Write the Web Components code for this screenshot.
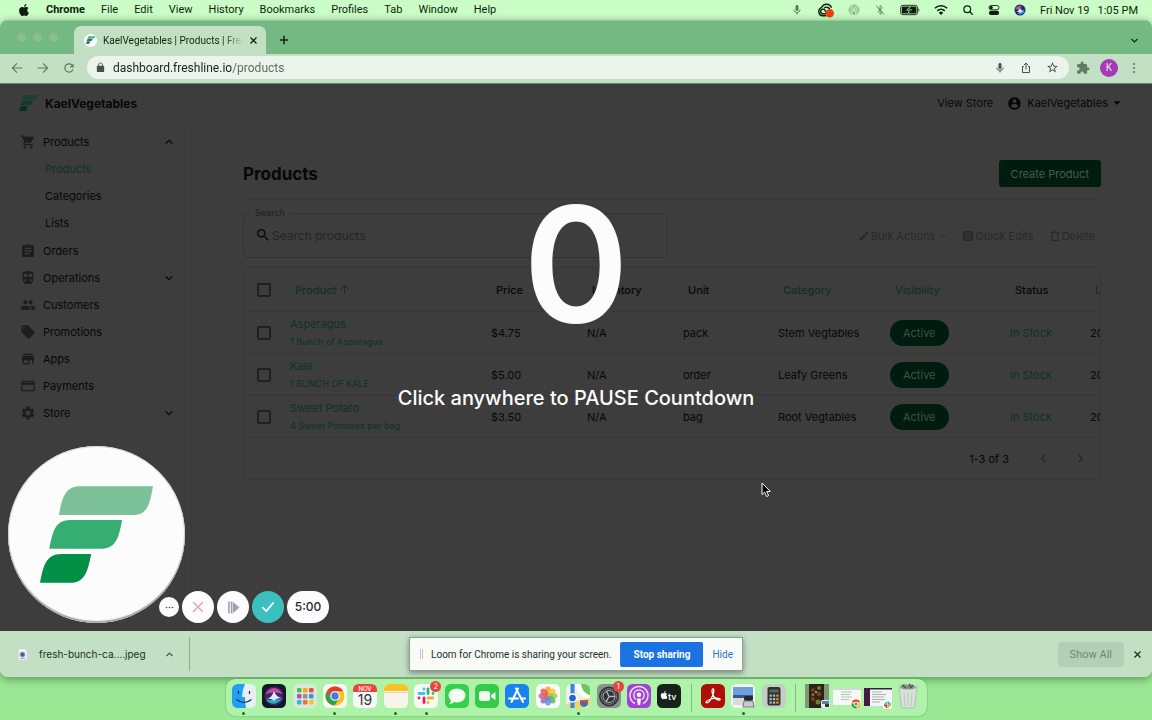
<!DOCTYPE html>
<html lang="en">
<head>
<meta charset="utf-8">
<title>KaelVegetables | Products | Freshline</title>
<style>
  html, body {
    margin: 0;
    height: 100%;
  }
  body {
    display: flex;
    flex-direction: column;
    overflow: hidden;
    background: linear-gradient(#cbfdc6 0 80px, #9ae894 600px);
    font-family: Roboto, "Liberation Sans", sans-serif;
    font-size: 11px;
    color: #10240f;
  }
  browser-window {
    flex: 1;
  }
</style>
</head>
<body>
<mac-menubar></mac-menubar>
<browser-window>
  <shop-dashboard></shop-dashboard>
  <loom-countdown></loom-countdown>
  <loom-controls></loom-controls>
</browser-window>
<mac-dock></mac-dock>

<script>
const ICONS = {
  apple: '<path d="M12.152 6.896c-.948 0-2.415-1.078-3.96-1.04-2.04.027-3.91 1.183-4.961 3.014-2.117 3.675-.546 9.103 1.519 12.09 1.013 1.454 2.208 3.09 3.792 3.039 1.52-.065 2.09-.987 3.935-.987 1.831 0 2.35.987 3.96.948 1.637-.026 2.676-1.48 3.676-2.948 1.156-1.688 1.636-3.325 1.662-3.415-.039-.013-3.182-1.221-3.22-4.857-.026-3.04 2.48-4.494 2.597-4.559-1.429-2.09-3.623-2.324-4.39-2.376-2-.156-3.675 1.09-4.61 1.09zM15.53 3.83c.843-1.012 1.4-2.427 1.245-3.83-1.207.052-2.662.805-3.532 1.818-.78.896-1.454 2.338-1.273 3.714 1.338.104 2.715-.688 3.559-1.701"/>',
  mic: '<path d="M12 14c1.66 0 3-1.34 3-3V5c0-1.66-1.34-3-3-3S9 3.34 9 5v6c0 1.66 1.34 3 3 3zm5.3-3c0 3-2.54 5.1-5.3 5.1S6.7 14 6.7 11H5c0 3.41 2.72 6.23 6 6.72V21h2v-3.28c3.28-.48 6-3.3 6-6.72h-1.7z"/>',
  cloud: '<g fill="none" stroke="currentColor" stroke-width="2"><path d="M13 19.500H8a6 6 0 0 1-1.500-11.600A7.500 7.500 0 0 1 20.500 8"/><path d="M13 16.500H8.500a3.200 3.200 0 1 1 2.500-5l3 4"/><path d="M10 9a4.800 4.800 0 0 1 8 1"/></g><circle cx="18" cy="16" r="6" fill="#f0400e"/>',
  airdrop: '<g fill="none" stroke="currentColor" stroke-width="1.700"><path d="M8 21a10 10 0 1 1 8 0"/><path d="M9 18a7 7 0 1 1 6 0"/><path d="M10 15a4 4 0 1 1 4 0"/></g><path d="M12 12l3 9H9z"/>',
  bluetooth: '<g fill="none" stroke="currentColor" stroke-width="1.700"><path d="M7 7.500l10 9-5 4.500V3l5 4.500-10 9"/><path d="M4 3l16 18"/></g>',
  battery: '<rect x="1" y="4" width="29" height="16" rx="4" fill="none" stroke="currentColor" stroke-width="1.500"/><rect x="3" y="6" width="25" height="12" rx="2"/><path d="M31.500 9v6q3-3 0-6z"/><path d="M18 5l-8 8h5l-2 6 8-8h-5z" fill="#c9fcc4"/><path d="M17 7.500l-4.500 4.500h4l-1.500 4.500 4.500-4.500h-4z"/>',
  wifi: '<g fill="none" stroke="currentColor" stroke-width="2.800"><path d="M1.500 9a15 15 0 0 1 21 0"/><path d="M5.500 13.500a9.500 9.500 0 0 1 13 0"/></g><path d="M12 20.500l-3.800-4a5.500 5.500 0 0 1 7.600 0z"/>',
  lens: '<g fill="none" stroke="currentColor" stroke-width="2.400"><circle cx="10.500" cy="10.500" r="6.800"/><path d="M15.500 15.500l6 6"/></g>',
  toggles: '<rect x="2" y="3" width="20" height="8.500" rx="4.250" fill="none" stroke="currentColor" stroke-width="1.800"/><circle cx="6.500" cy="7.200" r="3.200"/><path d="M6 13.500h12a4 4 0 0 1 0 8.500H6a4 4 0 0 1 0-8.500z"/>',
  siri: '<circle cx="12" cy="12" r="11" fill="#243064"/><path d="M3 9a10 8 0 0 1 13-5q-7 5-5 9z" fill="#d44c9c"/><path d="M21 13a9 9 0 0 1-14 6q7-2 6-8z" fill="#3d9be0"/><path d="M5 15q6-1 7-8 2 7 7 7-5 1-7 4-2-3-7-3z" fill="#e4f2fb"/>',
  back: '<path d="M21 12H4m8-8l-8 8 8 8" fill="none" stroke="currentColor" stroke-width="2"/>',
  forward: '<path d="M3 12h17m-8-8l8 8-8 8" fill="none" stroke="currentColor" stroke-width="2"/>',
  reload: '<path d="M17.650 6.350C16.200 4.900 14.210 4 12 4c-4.420 0-7.990 3.580-7.990 8s3.570 8 7.990 8c3.730 0 6.840-2.550 7.730-6h-2.080c-.820 2.330-3.040 4-5.650 4-3.310 0-6-2.690-6-6s2.690-6 6-6c1.660 0 3.140.69 4.220 1.780L13 11h7V4l-2.350 2.350z"/>',
  lock: '<path d="M18 8h-1V6c0-2.760-2.240-5-5-5S7 3.240 7 6v2H6c-1.100 0-2 .9-2 2v10c0 1.100.9 2 2 2h12c1.100 0 2-.9 2-2V10c0-1.100-.9-2-2-2zm-2.900 0H8.900V6c0-1.710 1.390-3.100 3.100-3.100s3.100 1.390 3.100 3.100v2z"/>',
  share: '<path d="M8 9H5v12h14V9h-3M12 15V2.500M8 6l4-4 4 4" fill="none" stroke="currentColor" stroke-width="2"/>',
  star: '<path d="M22 9.240l-7.190-.62L12 2 9.190 8.630 2 9.240l5.460 4.730L5.820 21 12 17.270 18.180 21l-1.630-7.030L22 9.240zM12 15.400l-3.760 2.270 1-4.280-3.320-2.880 4.380-.38L12 6.100l1.710 4.040 4.380.38-3.320 2.880 1 4.280L12 15.400z"/>',
  puzzle: '<path d="M20.500 11H19V7c0-1.100-.9-2-2-2h-4V3.500C13 2.120 11.880 1 10.500 1S8 2.120 8 3.500V5H4c-1.100 0-1.990.9-1.990 2v3.800H3.500c1.490 0 2.700 1.210 2.700 2.700s-1.210 2.700-2.700 2.700H2V20c0 1.100.9 2 2 2h3.800v-1.500c0-1.490 1.210-2.700 2.700-2.700 1.490 0 2.700 1.210 2.700 2.700V22H17c1.100 0 2-.9 2-2v-4h1.500c1.380 0 2.500-1.120 2.500-2.500S21.880 11 20.500 11z"/>',
  dots: '<circle cx="12" cy="4" r="2.200"/><circle cx="12" cy="12" r="2.200"/><circle cx="12" cy="20" r="2.200"/>',
  more: '<circle cx="4" cy="12" r="2.200"/><circle cx="12" cy="12" r="2.200"/><circle cx="20" cy="12" r="2.200"/>',
  close: '<path d="M4 4l16 16M20 4L4 20" fill="none" stroke="currentColor" stroke-width="3.400"/>',
  cross: '<path d="M3 3l18 18M21 3L3 21" fill="none" stroke="currentColor" stroke-width="3" stroke-linecap="round"/>',
  plus: '<path d="M12 2v20M2 12h20" fill="none" stroke="currentColor" stroke-width="3.600"/>',
  down: '<path d="M4 8l8 8 8-8" fill="none" stroke="currentColor" stroke-width="3"/>',
  up: '<path d="M4 16l8-8 8 8" fill="none" stroke="currentColor" stroke-width="3"/>',
  left: '<path d="M15.500 5l-7 7 7 7" fill="none" stroke="currentColor" stroke-width="2.600"/>',
  right: '<path d="M8.500 5l7 7-7 7" fill="none" stroke="currentColor" stroke-width="2.600"/>',
  caret: '<path d="M2 7h20L12 18z"/>',
  sort: '<path d="M12 22V4M3 12.500L12 3.500l9 9" fill="none" stroke="currentColor" stroke-width="2.200"/>',
  cart: '<path d="M7 18c-1.100 0-1.990.9-1.990 2S5.900 22 7 22s2-.9 2-2-.9-2-2-2zM1 2v2h2l3.600 7.590-1.350 2.450c-.16.280-.25.610-.25.960 0 1.100.9 2 2 2h12v-2H7.420c-.14 0-.25-.11-.25-.25l.03-.12.9-1.630h7.450c.75 0 1.410-.41 1.750-1.030l3.580-6.490c.08-.14.12-.31.12-.48 0-.55-.45-1-1-1H5.210l-.94-2H1zm16 16c-1.100 0-1.990.9-1.990 2s.89 2 1.990 2 2-.9 2-2-.9-2-2-2z"/>',
  orders: '<path d="M19 3h-4.180C14.400 1.840 13.300 1 12 1c-1.300 0-2.400.84-2.820 2H5c-1.100 0-2 .9-2 2v14c0 1.100.9 2 2 2h14c1.100 0 2-.9 2-2V5c0-1.100-.9-2-2-2zm-7 0c.55 0 1 .45 1 1s-.45 1-1 1-1-.45-1-1 .45-1 1-1zm2 14H7v-2h7v2zm3-4H7v-2h10v2zm0-4H7V7h10v2z"/>',
  train: '<path d="M12 2c-4 0-8 .5-8 4v9.500C4 17.430 5.570 19 7.500 19L6 20.500v.5h12v-.5L16.500 19c1.930 0 3.500-1.570 3.500-3.500V6c0-3.500-4-4-8-4zM7.500 17c-.83 0-1.500-.67-1.500-1.500S6.670 14 7.500 14s1.500.67 1.500 1.500S8.330 17 7.500 17zm3.500-7H6V6h5v4zm2 0V6h5v4h-5zm3.500 7c-.83 0-1.500-.67-1.500-1.500s.67-1.500 1.500-1.500 1.500.67 1.500 1.500-.67 1.500-1.500 1.500z"/>',
  people: '<path d="M16 11c1.660 0 2.990-1.340 2.990-3S17.660 5 16 5c-1.660 0-3 1.340-3 3s1.340 3 3 3zm-8 0c1.660 0 2.990-1.340 2.990-3S9.660 5 8 5C6.340 5 5 6.340 5 8s1.340 3 3 3zm0 2c-2.330 0-7 1.170-7 3.500V19h14v-2.500c0-2.330-4.670-3.500-7-3.500zm8 0c-.29 0-.62.02-.97.05 1.160.84 1.970 1.970 1.970 3.450V19h6v-2.500c0-2.330-4.670-3.500-7-3.500z"/>',
  tag: '<path d="M21.410 11.580l-9-9C12.050 2.220 11.550 2 11 2H4c-1.100 0-2 .9-2 2v7c0 .55.22 1.050.59 1.420l9 9c.36.36.86.58 1.410.58.55 0 1.050-.22 1.410-.59l7-7c.37-.36.59-.86.59-1.410 0-.55-.23-1.060-.59-1.420zM5.500 7C4.670 7 4 6.330 4 5.500S4.670 4 5.500 4 7 4.670 7 5.500 6.330 7 5.500 7z"/>',
  shop: '<path d="M20 4H4v2h16V4zm1 10v-2l-1-5H4l-1 5v2h1v6h10v-6h4v6h2v-6h1zm-9 4H6v-4h6v4z"/>',
  card: '<path d="M20 4H4c-1.110 0-1.990.89-1.990 2L2 18c0 1.110.89 2 2 2h16c1.110 0 2-.89 2-2V6c0-1.110-.89-2-2-2zm0 14H4v-8h16v8zm0-11H4V6h16v1z"/>',
  gear: '<path d="M19.140 12.940c.04-.3.06-.61.06-.94 0-.32-.02-.64-.07-.94l2.030-1.580c.18-.14.23-.41.12-.61l-1.920-3.320c-.12-.22-.37-.29-.59-.22l-2.390.96c-.5-.38-1.030-.7-1.620-.94l-.36-2.540c-.04-.24-.24-.41-.48-.41h-3.840c-.24 0-.43.17-.47.41l-.36 2.540c-.59.24-1.130.57-1.620.94l-2.390-.96c-.22-.08-.47 0-.59.22L2.740 8.870c-.12.21-.08.47.12.61l2.030 1.580c-.05.3-.09.63-.09.94s.02.64.07.94l-2.030 1.580c-.18.14-.23.41-.12.61l1.920 3.320c.12.22.37.29.59.22l2.390-.96c.5.38 1.030.7 1.620.94l.36 2.540c.05.24.24.41.48.41h3.840c.24 0 .44-.17.47-.41l.36-2.540c.59-.24 1.130-.56 1.620-.94l2.390.96c.22.08.47 0 .59-.22l1.920-3.320c.12-.22.07-.47-.12-.61l-2.010-1.580zM12 15.600c-1.980 0-3.600-1.620-3.600-3.600s1.620-3.600 3.600-3.600 3.600 1.620 3.600 3.600-1.620 3.600-3.600 3.600z"/>',
  account: '<path d="M12 2C6.480 2 2 6.480 2 12s4.480 10 10 10 10-4.480 10-10S17.520 2 12 2zm0 3c1.660 0 3 1.340 3 3s-1.340 3-3 3-3-1.340-3-3 1.340-3 3-3zm0 14.200c-2.500 0-4.710-1.280-6-3.220.03-1.990 4-3.080 6-3.080 1.990 0 5.970 1.090 6 3.080-1.290 1.940-3.500 3.220-6 3.220z"/>',
  search: '<path d="M15.500 14h-.79l-.28-.27C15.410 12.590 16 11.110 16 9.500 16 5.910 13.090 3 9.500 3S3 5.910 3 9.500 5.910 16 9.500 16c1.610 0 3.090-.59 4.230-1.570l.27.28v.79l5 4.990L20.490 19l-4.990-5zm-6 0C7.010 14 5 11.990 5 9.500S7.010 5 9.500 5 14 7.010 14 9.500 11.990 14 9.500 14z"/>',
  edit: '<path d="M3 17.250V21h3.750L17.810 9.940l-3.750-3.750L3 17.250zM20.710 7.040c.39-.39.39-1.020 0-1.410l-2.340-2.340c-.39-.39-1.020-.39-1.410 0l-1.830 1.830 3.750 3.750 1.830-1.830z"/>',
  sheet: '<path d="M2 2h20v20H2zM6 6v2.500h12V6zM6 11v2.500h12V11zM6 16v2.500h12V16z" fill-rule="evenodd"/>',
  bin: '<path d="M6 7v14h12V7M3 5h18M9 2.500h6" fill="none" stroke="currentColor" stroke-width="2.400"/>',
  check: '<path d="M3 13l6 6L21 5" fill="none" stroke="currentColor" stroke-width="3" stroke-linecap="round" stroke-linejoin="round"/>',
  pause: '<path d="M2 1h3v22H2zM7 1h3v22H7zM11 2l12 10-12 10z"/>',
  file: '<path d="M3 0h14l5 5v19H3z" fill="#f3f5f7" stroke="#c3ccd0"/><circle cx="12" cy="12" r="6" fill="#7e8ec2"/><path d="M8 14l4-6 4 6z" fill="#31406f"/><path d="M7 19h10v2H7z" fill="#8a9498"/>',
  freshline: '<path fill="var(--leaf-1, #7cc19a)" d="M57 87C66 35 76 0 120 0H340C331 50 325 87 280 87Z"/><path fill="var(--leaf-2, #36ad71)" d="M28 188C38 135 46 102 92 102H247C238 150 230 188 186 188Z"/><path fill="var(--leaf-3, #048f47)" d="M0 291C10 240 18 204 64 204H154C145 250 137 291 92 291Z"/>'
};

const VIEWBOX = {
  battery: '0 0 34 24',
  freshline: '0 0 340 291'
};

// <ui-icon name="cart"> : size comes from --w / --h on the host
class UiIcon extends HTMLElement {
  constructor() {
    super();
    this.attachShadow({ mode: 'open' });
  }
  connectedCallback() {
    const name = this.getAttribute('name');
    this.shadowRoot.innerHTML = `
      <style>
        :host { display: inline-block; flex: none; width: var(--w, 16px); height: var(--h, var(--w, 16px)); }
        svg { display: block; width: 100%; height: 100%; fill: currentColor; }
      </style>
      <svg viewBox="${VIEWBOX[name] || '0 0 24 24'}" aria-hidden="true">${ICONS[name]}</svg>`;
  }
}
customElements.define('ui-icon', UiIcon);

class MacMenubar extends HTMLElement {
  constructor() {
    super();
    this.attachShadow({ mode: 'open' });
  }
  connectedCallback() {
    const menus = ['File', 'Edit', 'View', 'History', 'Bookmarks', 'Profiles', 'Tab', 'Window', 'Help'];
    this.shadowRoot.innerHTML = `
      <style>
        :host {
          display: flex;
          align-items: center;
          justify-content: space-between;
          height: 20px;
          padding: 0 14px 0 18px;
          color: #0d1f0c;
        }
        nav, .status { display: flex; align-items: center; }
        nav { gap: 16px; }
        button { border: 0; padding: 0; background: none; font: inherit; color: inherit; line-height: 20px; }
        .app { font-weight: 700; }
        .status { gap: 14px; --w: 12px; }
        .faint { color: #7fa67c; }
        .mic { color: #577a55; }
        .wide { --w: 20px; --h: 14px; }
        .cc { --w: 17px; }
        .group { display: flex; gap: 8px; }
      </style>
      <nav aria-label="Menu bar">
        <ui-icon name="apple" style="--w:12px"></ui-icon>
        <button class="app">Chrome</button>
        ${menus.map(m => `<button>${m}</button>`).join('')}
      </nav>
      <div class="status">
        <ui-icon class="mic" name="mic"></ui-icon>
        <ui-icon class="cc" name="cloud"></ui-icon>
        <ui-icon class="faint" name="airdrop"></ui-icon>
        <ui-icon class="mic" name="bluetooth"></ui-icon>
        <ui-icon class="wide" name="battery"></ui-icon>
        <ui-icon name="wifi" style="--w:14px"></ui-icon>
        <ui-icon name="lens"></ui-icon>
        <ui-icon name="toggles"></ui-icon>
        <ui-icon name="siri"></ui-icon>
        <div class="group"><span>Fri Nov 19</span><span>1:05 PM</span></div>
      </div>`;
  }
}
customElements.define('mac-menubar', MacMenubar);

class BrowserWindow extends HTMLElement {
  constructor() {
    super();
    this.attachShadow({ mode: 'open' });
  }
  connectedCallback() {
    this.shadowRoot.innerHTML = `
      <style>
        :host {
          display: flex;
          flex-direction: column;
          min-height: 0;
          border-radius: 8px;
          background: #c3dfc4;
          box-shadow: 0 2px 8px rgba(20, 60, 20, .5);
          overflow: hidden;
        }
        button { border: 0; padding: 0; background: none; font: inherit; color: inherit; display: flex; align-items: center; }
        .tabs {
          display: flex;
          align-items: flex-end;
          height: 33px;
          border-top: 1px solid #92cb98;
          padding: 0 13px 0 17px;
          background: #74b981;
        }
        .lights { display: flex; gap: 7px; align-self: center; margin-right: 16px; }
        .lights i { width: 9px; height: 9px; border-radius: 50%; background: #8dbc91; }
        .tab {
          display: flex;
          align-items: center;
          box-sizing: border-box;
          width: 192px;
          height: 28px;
          padding: 0 8px 0 10px;
          gap: 6px;
          border-radius: 7px 7px 0 0;
          background: #c3dfc4;
        }
        .tab span {
          flex: 1;
          overflow: hidden;
          white-space: nowrap;
          font-size: 10px;
          -webkit-mask-image: linear-gradient(90deg, #000 86%, transparent);
        }
        .fav { display: grid; place-items: center; width: 13px; height: 13px; border-radius: 50%; background: #fff; --w: 9px; --h: 8px; --leaf-1: #57a67c; --leaf-2: #1f7f58; --leaf-3: #0a6a44; }
        .tab button { --w: 9px; }
        .new { --w: 10px; margin: 0 0 9px 13px; }
        .menu { --w: 9px; margin: 0 0 9px auto; }
        .bar { display: flex; align-items: center; box-sizing: border-box; height: 29px; padding: 0 12px 2px 10px; gap: 12px; color: #5f7d62; --w: 14px; }
        .url {
          flex: 1;
          display: flex;
          align-items: center;
          height: 23px;
          margin-left: -1px;
          padding: 0 10px 0 8px;
          gap: 14px;
          border-radius: 12px;
          background: #eaf4eb;
          color: #4a4f4b;
          --w: 12px;
        }
        .lock { --w: 11px; margin-right: -7px; }
        .url input {
          flex: 1;
          min-width: 0;
          border: 0;
          padding: 0;
          outline: 0;
          font: 12px Roboto, sans-serif;
          color: #17201a;
          background: linear-gradient(90deg, #17201a 119px, #5b665d 119px);
          -webkit-background-clip: text;
          background-clip: text;
          -webkit-text-fill-color: transparent;
        }
        .extras { display: flex; align-items: center; gap: 10px; margin-left: -5px; }
        .avatar { width: 18px; height: 18px; justify-content: center; border-radius: 50%; background: #a63ab4; color: #f3dff5; font-size: 10px; }
        .page { position: relative; flex: 1; min-height: 0; border-top: 1px solid #6e7f6f; background: #3d3d3d; display: flex; box-sizing: border-box; overflow: hidden; }
        .downloads {
          position: relative;
          display: flex;
          align-items: center;
          height: 46px;
          padding: 0 10px 0 17px;
          color: #20301f;
          background: radial-gradient(closest-side at 50% 100%, rgba(70, 100, 70, .4) 40%, transparent) 50% 100% / 75% 28px no-repeat, #c3dfc4;
        }
        .file { display: flex; align-items: center; gap: 11px; height: 34px; padding-right: 15px; border-right: 1px solid #93ad94; font: 10px Inter, sans-serif; --w: 11px; }
        .file button { margin-left: 8px; --w: 9px; color: #44594a; }
        .all { margin-left: auto; height: 25px; padding: 0 12px; border-radius: 4px; background: #b3cfb5; color: #6d8a70; }
        .x { --w: 9px; margin-left: 9px; }
        .sharing {
          position: absolute;
          left: 50%;
          top: 6px;
          transform: translateX(-50%);
          display: flex;
          align-items: center;
          box-sizing: border-box;
          height: 34px;
          padding: 0 9px 0 10px;
          white-space: nowrap;
          background: #f9fbf9;
          border: 1px solid #8ba08c;
          box-shadow: 0 2px 6px rgba(0, 0, 0, .4);
          font-size: 10px;
        }
        .grip { width: 1px; height: 10px; border: solid #c5c5c5; border-width: 0 1px; margin-right: 8px; }
        .stop { height: 25px; margin: 0 9px; padding: 0 13px; border-radius: 2px; background: #1a73e0; color: #fff; font-weight: 700; }
        .sharing a { color: #2b74cf; text-decoration: none; }
      </style>
      <div class="tabs">
        <div class="lights"><i></i><i></i><i></i></div>
        <div class="tab">
          <div class="fav"><ui-icon name="freshline"></ui-icon></div>
          <span>KaelVegetables | Products | Freshline</span>
          <button aria-label="Close tab"><ui-icon name="close"></ui-icon></button>
        </div>
        <button class="new" aria-label="New tab"><ui-icon name="plus"></ui-icon></button>
        <button class="menu" aria-label="Search tabs"><ui-icon name="down"></ui-icon></button>
      </div>
      <div class="bar">
        <button aria-label="Back"><ui-icon name="back"></ui-icon></button>
        <button aria-label="Forward"><ui-icon name="forward"></ui-icon></button>
        <button aria-label="Reload"><ui-icon name="reload"></ui-icon></button>
        <div class="url">
          <ui-icon class="lock" name="lock"></ui-icon>
          <input aria-label="Address" value="dashboard.freshline.io/products">
          <button aria-label="Voice"><ui-icon name="mic"></ui-icon></button>
          <button aria-label="Share"><ui-icon name="share"></ui-icon></button>
          <button aria-label="Bookmark"><ui-icon name="star" style="--w:13px"></ui-icon></button>
        </div>
        <div class="extras">
          <button aria-label="Extensions"><ui-icon name="puzzle"></ui-icon></button>
          <button class="avatar">K</button>
          <button aria-label="Chrome menu"><ui-icon name="dots" style="--w:12px"></ui-icon></button>
        </div>
      </div>
      <div class="page"><slot></slot></div>
      <div class="downloads">
        <div class="file">
          <ui-icon name="file"></ui-icon>
          <span>fresh-bunch-ca....jpeg</span>
          <button aria-label="Download options"><ui-icon name="up"></ui-icon></button>
        </div>
        <button class="all">Show All</button>
        <button class="x" aria-label="Close downloads"><ui-icon name="close"></ui-icon></button>
        <div class="sharing">
          <div class="grip"></div>
          <span>Loom for Chrome is sharing your screen.</span>
          <button class="stop">Stop sharing</button>
          <a href="#">Hide</a>
        </div>
      </div>`;
  }
}
customElements.define('browser-window', BrowserWindow);

class NavItem extends HTMLElement {
  constructor() {
    super();
    this.attachShadow({ mode: 'open' });
  }
  connectedCallback() {
    const icon = this.getAttribute('icon');
    const arrow = this.getAttribute('arrow');
    this.shadowRoot.innerHTML = `
      <style>
        :host { display: block; }
        a { display: flex; align-items: center; height: 27px; padding: 0 17px 0 20px; gap: 7px; color: #070707; text-decoration: none; }
        :host([sub]) a { padding-left: 45px; }
        :host([current]) a { color: #0e3226; }
        .icon { color: #1d1d1d; }
        .arrow { margin-left: auto; --w: 10px; }
      </style>
      <a href="#">
        ${icon ? `<ui-icon class="icon" name="${icon}"></ui-icon>` : ''}
        <slot></slot>
        ${arrow ? `<ui-icon class="arrow" name="${arrow}"></ui-icon>` : ''}
      </a>`;
  }
}
customElements.define('nav-item', NavItem);

class ShopDashboard extends HTMLElement {
  constructor() {
    super();
    this.attachShadow({ mode: 'open' });
  }
  connectedCallback() {
    const rows = [
      ['Asperagus', '1 Bunch of Asparagus', '$4.75', 'N/A', 'pack', 'Stem Vegtables'],
      ['Kale', '1 BUNCH OF KALE', '$5.00', 'N/A', 'order', 'Leafy Greens'],
      ['Sweet Potato', '4 Sweet Potatoes per bag', '$3.50', 'N/A', 'bag', 'Root Vegtables']
    ];
    this.shadowRoot.innerHTML = `
      <style>
        :host {
          flex: 1;
          display: flex;
          flex-direction: column;
          min-width: 0;
          font-family: Inter, sans-serif;
          font-size: 11px;
          color: #070707;
        }
        button { border: 0; padding: 0; background: none; font: inherit; color: inherit; display: flex; align-items: center; }
        a { color: inherit; text-decoration: none; }
        header { display: flex; align-items: center; height: 38px; padding: 0 31px 6px 19px; }
        .brand { display: flex; align-items: center; gap: 7px; margin-right: auto; font-size: 12px; font-weight: 700; }
        .brand ui-icon { --w: 19px; --h: 16px; --leaf-1: #1f3f31; --leaf-2: #123b29; --leaf-3: #082f1c; }
        .user { margin-left: 14px; gap: 5px; --w: 15px; }
        .body { flex: 1; display: flex; min-height: 0; }
        nav { width: 191px; border-right: 1px solid #393939; }
        .sub { padding-bottom: 1px; }
        main { flex: 1; min-width: 0; padding: 32px 51px 0; }
        .title { display: flex; align-items: center; justify-content: space-between; padding-bottom: 12px; border-bottom: 1px solid #373737; }
        h1 { margin: 0; font-size: 17px; line-height: 20px; font-weight: 700; }
        .create { height: 27px; padding: 0 12px; border-radius: 3px; background: #001b10; color: #4d5a54; }
        .tools { display: flex; align-items: center; justify-content: space-between; margin: 7px 0 9px; }
        fieldset {
          flex: 0 1 425px;
          box-sizing: border-box;
          min-width: 0;
          margin: 0;
          padding: 0 11px;
          border: 1px solid #333;
          border-radius: 5px;
        }
        legend { padding: 0 4px; margin-left: -4px; line-height: 12px; font-size: 9px; color: #202020; }
        .field { display: flex; align-items: center; gap: 1px; height: 32px; padding-bottom: 6px; }
        input[type=search] { flex: 1; min-width: 0; border: 0; padding: 0; outline: 0; background: none; font: 12px Inter, sans-serif; }
        input::placeholder { color: #252525; opacity: 1; }
        .actions { display: flex; gap: 15px; padding: 6px 6px 0 0; color: #292929; --w: 12px; }
        .actions button { gap: 1px; }
        .grid { border: 1px solid #373737; border-radius: 5px; overflow: hidden; }
        table { table-layout: fixed; width: calc(100% + 90px); border-collapse: collapse; }
        th, td { padding: 0; text-align: left; font-weight: 400; border-bottom: 1px solid #373737; white-space: nowrap; }
        th { height: 43px; padding-left: 5px; font-weight: 500; }
        td { height: 42px; box-sizing: border-box; }
        tr > :first-child { padding-left: 13px; }
        th.link, .stock { color: #0e3226; }
        th .sort { display: flex; align-items: center; gap: 3px; font-weight: 500; --w: 11px; }
        td a { display: block; line-height: 17px; color: #0e3226; }
        td small { font-size: 9px; }
        input[type=checkbox] { appearance: none; display: block; width: 14px; height: 14px; margin: 0; border: 2px solid #1f1f1f; border-radius: 2px; }
        .pill { display: inline-block; padding: 0 13px; border-radius: 13px; line-height: 26px; background: #001b10; color: #41514a; }
        .pager { display: flex; align-items: center; justify-content: flex-end; height: 41px; padding-right: 13px; gap: 24px; --w: 13px; }
        .pager button { color: #272727; }
        .pager span { margin-right: 4px; }
      </style>
      <header>
        <div class="brand"><ui-icon name="freshline"></ui-icon>KaelVegetables</div>
        <a href="#">View Store</a>
        <button class="user"><ui-icon name="account"></ui-icon>KaelVegetables<ui-icon name="caret" style="--w:8px"></ui-icon></button>
      </header>
      <div class="body">
        <nav>
          <nav-item icon="cart" arrow="up">Products</nav-item>
          <div class="sub">
            <nav-item sub current>Products</nav-item>
            <nav-item sub>Categories</nav-item>
            <nav-item sub>Lists</nav-item>
          </div>
          <nav-item icon="orders">Orders</nav-item>
          <nav-item icon="train" arrow="down">Operations</nav-item>
          <nav-item icon="people">Customers</nav-item>
          <nav-item icon="tag">Promotions</nav-item>
          <nav-item icon="shop">Apps</nav-item>
          <nav-item icon="card">Payments</nav-item>
          <nav-item icon="gear" arrow="down">Store</nav-item>
        </nav>
        <main>
          <div class="title">
            <h1>Products</h1>
            <button class="create">Create Product</button>
          </div>
          <div class="tools">
            <fieldset>
              <legend><label for="q">Search</label></legend>
              <div class="field">
                <ui-icon name="search"></ui-icon>
                <input type="search" id="q" placeholder="Search products">
              </div>
            </fieldset>
            <div class="actions">
              <button disabled><ui-icon name="edit"></ui-icon>Bulk Actions <ui-icon name="down" style="--w:8px;margin-left:3px"></ui-icon></button>
              <button disabled><ui-icon name="sheet"></ui-icon>Quick Edits</button>
              <button disabled><ui-icon name="bin"></ui-icon>Delete</button>
            </div>
          </div>
          <div class="grid">
            <table>
              <colgroup>
                <col style="width:46px"><col><col style="width:96px"><col style="width:96px"><col style="width:95px">
                <col style="width:112px"><col style="width:120px"><col style="width:80px"><col style="width:100px">
              </colgroup>
              <thead>
                <tr>
                  <th><input type="checkbox" aria-label="Select all"></th>
                  <th class="link"><span class="sort">Product <ui-icon name="sort"></ui-icon></span></th>
                  <th>Price</th><th>Inventory</th><th>Unit</th>
                  <th class="link">Category</th><th class="link">Visibility</th><th>Status</th><th class="link">Last Updated</th>
                </tr>
              </thead>
              <tbody>
                ${rows.map(r => `
                <tr>
                  <td><input type="checkbox" aria-label="Select ${r[0]}"></td>
                  <td><a href="#">${r[0]}</a><a href="#"><small>${r[1]}</small></a></td>
                  <td>${r[2]}</td><td>${r[3]}</td><td>${r[4]}</td><td>${r[5]}</td>
                  <td><span class="pill">Active</span></td>
                  <td class="stock">In Stock</td>
                  <td>2021-11-19</td>
                </tr>`).join('')}
              </tbody>
            </table>
            <div class="pager">
              <span>1-3 of 3</span>
              <button aria-label="Previous page"><ui-icon name="left"></ui-icon></button>
              <button aria-label="Next page"><ui-icon name="right"></ui-icon></button>
            </div>
          </div>
        </main>
      </div>`;
  }
}
customElements.define('shop-dashboard', ShopDashboard);

class LoomCountdown extends HTMLElement {
  constructor() {
    super();
    this.attachShadow({ mode: 'open' });
  }
  connectedCallback() {
    this.shadowRoot.innerHTML = `
      <style>
        :host {
          position: absolute;
          inset: 0;
          display: flex;
          flex-direction: column;
          align-items: center;
          padding-top: 98px;
          color: #fcfcfc;
        }
        .count { font: 600 160px/164px Inter, sans-serif; }
        p { margin: 38px 0 0; font: 500 20px/28px Inter, sans-serif; }
        svg { position: absolute; left: 66%; top: 398px; width: 12px; height: 16px; }
      </style>
      <div class="count">0</div>
      <p>Click anywhere to PAUSE Countdown</p>
      <svg viewBox="0 0 12 16"><path d="M2 1v11.500l2.700-2.400 1.900 4.400 2-.9-1.900-4.200h3.600z" fill="#000" stroke="#fff"/></svg>`;
  }
}
customElements.define('loom-countdown', LoomCountdown);

class LoomControls extends HTMLElement {
  constructor() {
    super();
    this.attachShadow({ mode: 'open' });
  }
  connectedCallback() {
    this.shadowRoot.innerHTML = `
      <style>
        :host { position: absolute; left: 8px; bottom: 8px; display: flex; align-items: flex-end; }
        .bubble {
          display: grid;
          place-items: center;
          width: 177px;
          height: 177px;
          border-radius: 50%;
          background: #fcfcfc;
          box-shadow: inset 0 -2px 1px #a9a9a9, inset 0 0 0 1px #d8d8d8;
          --w: 113px;
          --h: 97px;
        }
        .buttons { display: flex; align-items: center; gap: 3px; margin-left: -26px; }
        button { display: grid; place-items: center; width: 32px; height: 32px; padding: 0; border: 0; border-radius: 50%; background: #fdfdff; }
        .more { width: 20px; height: 20px; color: #4b4b55; --w: 9px; }
        .cancel { color: #f1a3a3; --w: 12px; }
        .pause { color: #9ba3ae; --w: 13px; }
        .done { background: #3bbfbf; color: #fff; --w: 14px; }
        time { width: 42px; border-radius: 16px; background: #fdfdff; text-align: center; font: 500 12px/32px Inter, sans-serif; color: #25252f; }
      </style>
      <div class="bubble"><ui-icon name="freshline"></ui-icon></div>
      <div class="buttons">
        <button class="more" aria-label="More"><ui-icon name="more"></ui-icon></button>
        <button class="cancel" aria-label="Cancel recording"><ui-icon name="cross"></ui-icon></button>
        <button class="pause" aria-label="Pause"><ui-icon name="pause"></ui-icon></button>
        <button class="done" aria-label="Finish"><ui-icon name="check"></ui-icon></button>
        <time>5:00</time>
      </div>`;
  }
}
customElements.define('loom-controls', LoomControls);

// every tile is drawn on a 24 x 24 canvas
const tile = (fill, art) => `<rect width="24" height="24" rx="5.500" fill="${fill}"/>${art}`;
const petals = ['#f6a12f', '#e9cb3c', '#a7c84a', '#5bb878', '#5a9bd6', '#8f74c4', '#d0659c', '#ea5f48'];
const pads = ['#57b947', '#f5a623', '#e9503f', '#b04fc0', '#8d9298', '#3f8ef0', '#38b6d8', '#f36a3d', '#f2c233'];

const APPS = [
  { label: 'Finder', open: 1, art: tile('#e8eef5', '<path d="M5.500 0H13q-3 6-3 13h3q0 6 1 11H5.500A5.500 5.500 0 0 1 0 18.500v-13A5.500 5.500 0 0 1 5.500 0z" fill="#1ea0f5"/><path d="M6.500 7v3M17.500 7v3M4.500 15.500q7.500 6 15 0" fill="none" stroke="#1b2a3c" stroke-width="1.200"/>') },
  { label: 'Siri', art: tile('#15152b', '<circle cx="12" cy="12" r="9.500" fill="#3a2a63"/><path d="M3 10q9-12 18 0-9-3-18 0z" fill="#c9479b"/><path d="M4 16q8 8 16-1-8 1-16 1z" fill="#2da9c9"/><path d="M4 15q6-1 8-8 2 6 8 7-6 0-8 3-2-3-8-2z" fill="#d9ecfa"/>') },
  { label: 'Launchpad', art: tile('#d7e9d9', pads.map((c, i) => `<rect x="${4 + i % 3 * 6}" y="${4 + Math.floor(i / 3) * 6}" width="4.500" height="4.500" rx="1" fill="${c}"/>`).join('')) },
  { label: 'Chrome', open: 1, art: tile('#f4f7f4', '<circle cx="12" cy="12" r="9.500" fill="#fbc116"/><path d="M3.800 7.200A9.500 9.500 0 0 1 20.200 7.200H12z" fill="#e33b2e"/><path d="M3.800 7.200L8 14.400 12 12V7.200z" fill="#e33b2e"/><path d="M3.800 7.200A9.500 9.500 0 0 0 11.500 21.500L16 14.500 8 14.400z" fill="#2da14c"/><circle cx="12" cy="12" r="4.800" fill="#fff"/><circle cx="12" cy="12" r="3.700" fill="#3f7ee8"/>') },
  { label: 'Calendar', art: tile('#f8f8f6', '<path d="M0 8V5.500A5.500 5.500 0 0 1 5.500 0h13A5.500 5.500 0 0 1 24 5.500V8z" fill="#e9453c"/><text x="12" y="6.500" font-size="6" font-weight="500" fill="#fff" text-anchor="middle">NOV</text><text x="12" y="21" font-size="14" fill="#333" text-anchor="middle">19</text>') },
  { label: 'Notes', open: 1, art: tile('#f7f5ea', '<path d="M0 7V5.500A5.500 5.500 0 0 1 5.500 0h13A5.500 5.500 0 0 1 24 5.500V7z" fill="#f8c321"/><path d="M0 8.500h24" stroke="#cfcab8" stroke-width=".8"/>') },
  { label: 'Slack', open: 1, badge: 2, art: tile('#f7f9f7', '<g stroke-width="2.800" stroke-linecap="round"><path d="M10 5v0M10 9.500H5" stroke="#36c5f0"/><path d="M14 5v4.500M19 9.500v0" stroke="#2eb67d"/><path d="M14 14H19M14 18.500v0" stroke="#ecb22e"/><path d="M10 14v4.500M5 14v0" stroke="#e01e5a"/></g>') },
  { label: 'Messages', art: tile('#35d04c', '<ellipse cx="12" cy="11.500" rx="8.500" ry="7" fill="#f4fff4"/><path d="M6 15q0 4-2 5 4 0 6-3z" fill="#f4fff4"/>') },
  { label: 'FaceTime', art: tile('#34cb4d', '<rect x="4" y="7" width="11" height="10" rx="2.500" fill="#eefcef"/><path d="M16 11l4.500-3v8L16 13z" fill="#eefcef"/>') },
  { label: 'App Store', art: tile('#1a82ee', '<path d="M13 4.500L6.500 18M11 4.500l7 13.500M4 14.500h9M17 14.500h3" stroke="#fff" stroke-width="2" stroke-linecap="round" fill="none"/>') },
  { label: 'Photos', art: tile('#fafaf8', petals.map((c, i) => `<ellipse cx="12" cy="7" rx="3" ry="4.500" fill="${c}" opacity=".88" transform="rotate(${i * 45} 12 12)"/>`).join('')) },
  { label: 'Maps', open: 1, art: tile('#eef0ea', '<path d="M12 0h6.500A5.500 5.500 0 0 1 24 5.500V14Q14 11 12 0z" fill="#6cc763"/><path d="M10 0h5q1 9 9 11v4Q11 13 10 0z" fill="#fff"/><path d="M0 20l24-6v6q-3 4-8 4H5q-4 0-5-4z" fill="#f4d169"/><path d="M4.500 0h4v24h-4z" fill="#3784e6"/><circle cx="6.500" cy="14" r="4" fill="#2468cf" stroke="#fff" stroke-width="1.300"/><path d="M14 16h8v3q0 3-4 4-4-1-4-4z" fill="#3b6fb8"/><path d="M14 16h8v2h-8z" fill="#db4b45"/>') },
  { label: 'System Preferences', badge: 1, art: tile('#8c9092', '<circle cx="12" cy="12.500" r="10" fill="#2e3133"/><circle cx="12" cy="12.500" r="7.800" fill="none" stroke="#a8acae" stroke-width="1" stroke-dasharray="1.500 .8"/><circle cx="12" cy="12.500" r="6" fill="none" stroke="#b5b9ba"/><path d="M12 12.500L9.500 7M12 12.500h6M12 12.500L9 18" stroke="#b5b9ba" stroke-width="1.400"/>') },
  { label: 'Podcasts', art: tile('#a142d3', '<g fill="none" stroke="#f3e3fb" stroke-width="1.400"><path d="M8 19.500a9 9 0 1 1 8 0"/><path d="M9 15.500a5.300 5.300 0 1 1 6 0"/></g><circle cx="12" cy="10.800" r="2.300" fill="#fff"/><path d="M10 14.500h4l-.8 6.500h-2.400z" fill="#fff"/>') },
  { label: 'TV', art: tile('#17221c', `<g transform="translate(3 7) scale(.34)" fill="#fff">${ICONS.apple}</g><text x="11" y="15.500" font-size="9" font-weight="500" fill="#fff">tv</text>`) },
  null,
  { label: 'Acrobat', art: tile('#b00f08', '<path d="M5 18.500c0-2.500 9-5.500 13.500-4 2 1.500-1.500 2.500-4 0-2.500-2.300-4.500-7-3-9.500 2-1 1.500 3.500 0 7-1.800 4-4.500 8-6.500 6.500z" fill="none" stroke="#fff" stroke-width="1.300"/>') },
  { label: 'Preview', open: 1, art: tile('#f1f4f4', '<path d="M2 3h20v9H2z" fill="#6f9fd6"/><path d="M2 11h20v3H2z" fill="#2f5d92"/><path d="M2 14h20v7H2z" fill="#dcdad2"/><rect x="13" y="12" width="9" height="5" rx="2" fill="#24282c"/><path d="M13 17h9l1 6H12z" fill="#c8cdd0" stroke="#777"/>') },
  { label: 'Calculator', art: tile('#c3cfc4', '<rect x="5.500" y="3" width="13" height="18.500" rx="2" fill="#2d3335"/><path d="M7.500 5.500h9v3h-9z" fill="#5a6467"/><g fill="#aeb4b6"><path d="M7.500 10.500h2.300v2.300H7.500zM10.900 10.500h2.300v2.300h-2.300zM7.500 14h2.300v2.300H7.500zM10.900 14h2.300v2.300h-2.300zM7.500 17.500h2.300v2.300H7.500zM10.900 17.500h2.300v2.300h-2.300z"/></g><path d="M14.300 10.500h2.300v2.300h-2.300zM14.300 14h2.300v2.300h-2.300zM14.300 17.500h2.300v2.300h-2.300z" fill="#f08f1e"/>') },
  null,
  { label: 'Photo window', art: '<path d="M0 0h24v24H0z" fill="#7d9677"/><path d="M4 0h15v24H4z" fill="#2a2416"/><g fill="#7c3a1c"><circle cx="8" cy="6" r="2"/><circle cx="14" cy="10" r="2.400"/><circle cx="8" cy="15" r="2.200"/></g><g fill="#6e7f2c"><circle cx="14" cy="4" r="2"/><circle cx="8" cy="10.500" r="1.500"/><circle cx="13" cy="18" r="2.500"/></g><circle cx="11" cy="8" r="1" fill="#d8b68b"/><rect x="16" y="16" width="9" height="8" rx="1.500" fill="#e9eff2"/><path d="M17 17h7v3h-7z" fill="#4d82bd"/><path d="M20 20h4v3h-4z" fill="#333"/>' },
  { label: 'Chrome window', art: '<path d="M-2 4h28v17H-2z" fill="#f6f8f6"/><path d="M-2 4h28v2H-2z" fill="#cfdccf"/><path d="M6 8h11M6 10.500h9M6 13h11M6 15.500h8" stroke="#b8beb9"/><circle cx="21" cy="20" r="4.500" fill="#fbc116"/><path d="M17 18a4.500 4.500 0 0 1 8 0z" fill="#e33b2e"/><path d="M16.500 19.500a4.500 4.500 0 0 0 4.500 5l1-4z" fill="#2da14c"/><circle cx="21" cy="20" r="2" fill="#3f7ee8" stroke="#fff"/>' },
  { label: 'Slack window', art: '<path d="M-2 4h28v18H-2z" fill="#f4f6f5"/><path d="M-2 4h6v18h-6z" fill="#451a47"/><path d="M-2 4h28v1.500H-2z" fill="#33203a"/><path d="M6 8h10M6 10.500h14M6 13h12M6 15.500h13M6 18h8" stroke="#aab0ad"/><rect x="17" y="16" width="9" height="9" rx="2" fill="#fff"/><g stroke-width="1.600"><path d="M20.500 17.500V20H18" stroke="#36c5f0" fill="none"/><path d="M22.500 17.500V20H25" stroke="#2eb67d" fill="none"/><path d="M20.500 24v-2.500H18" stroke="#e01e5a" fill="none"/><path d="M22.500 24v-2.500H25" stroke="#ecb22e" fill="none"/></g>' },
  { label: 'Trash', art: '<path d="M3 2h18l-2.500 21.500q-6.500 1.500-13 0z" fill="#d9e2da" stroke="#b1bdb3"/><path d="M4 4q3-6 7-3 5-3 9 3-8 3-16 0z" fill="#8b9692"/><path d="M6 1l4 3M13 0l2 4M17 1l-2 3" stroke="#3f4c56" stroke-width="1.200"/><circle cx="12" cy="3" r="1" fill="#c9574d"/><path d="M8 8l1 14M12 8v14M16 8l-1 14" stroke="#bcc8be"/>' }
];

class MacDock extends HTMLElement {
  constructor() {
    super();
    this.attachShadow({ mode: 'open' });
  }
  connectedCallback() {
    this.shadowRoot.innerHTML = `
      <style>
        :host { display: flex; justify-content: center; padding: 2px 0 4px; font-family: Inter, sans-serif; }
        .dock {
          display: flex;
          align-items: center;
          box-sizing: border-box;
          width: 701px;
          height: 37px;
          padding: 0 3px;
          border-radius: 9px;
          background: #aff3ab;
          box-shadow: 0 0 2px #5f9a5e;
        }
        button { position: relative; flex: 1; display: flex; justify-content: center; padding: 0 0 3px; border: 0; background: none; font: inherit; }
        svg { width: 24px; height: 24px; overflow: visible; }
        .open::after { content: ""; position: absolute; bottom: -4px; width: 3px; height: 3px; border-radius: 50%; background: #1d6a22; }
        .badge { position: absolute; top: -3px; right: 0; width: 11px; border-radius: 50%; background: #e5453c; color: #fff; font-size: 7px; line-height: 11px; }
        .line { flex: none; box-sizing: border-box; width: 13px; height: 28px; border: solid transparent; border-width: 0 6px; background: #7fbf7d content-box; }
      </style>
      <div class="dock">
        ${APPS.map(a => a ? `
        <button class="${a.open ? 'open' : ''}" aria-label="${a.label}">
          <svg viewBox="0 0 24 24">${a.art}</svg>
          ${a.badge ? `<span class="badge">${a.badge}</span>` : ''}
        </button>` : '<div class="line"></div>').join('')}
      </div>`;
  }
}
customElements.define('mac-dock', MacDock);
</script>
</body>
</html>
